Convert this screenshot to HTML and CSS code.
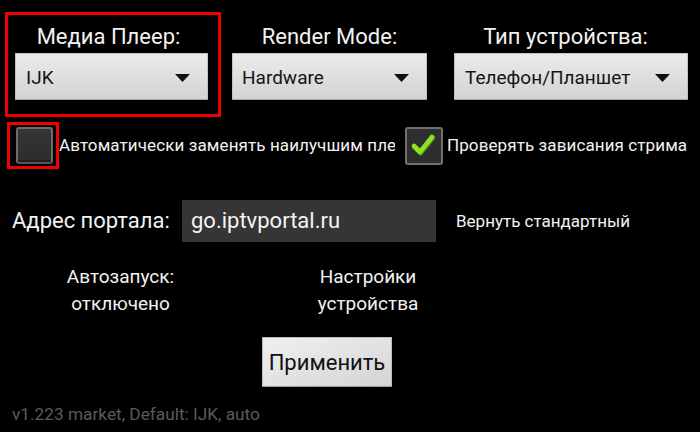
FILE: index.html
```html
<!DOCTYPE html>
<html lang="ru">
<head>
<meta charset="utf-8">
<title>Настройки</title>
<link rel="stylesheet" href="styles.css">
</head>
<body>
<div class="screen">
  <div class="top-row">
    <div class="col col-player highlight">
      <div class="label label-player">Медиа Плеер:</div>
      <div class="select">
        <span class="select-text">IJK</span>
        <svg class="arrow" width="15" height="8" viewBox="0 0 15 8"><polygon points="0,0 15,0 7.5,8" fill="#111"/></svg>
      </div>
    </div>
    <div class="col col-render">
      <div class="label">Render Mode:</div>
      <div class="select">
        <span class="select-text">Hardware</span>
        <svg class="arrow" width="15" height="8" viewBox="0 0 15 8"><polygon points="0,0 15,0 7.5,8" fill="#111"/></svg>
      </div>
    </div>
    <div class="col col-device">
      <div class="label label-device">Тип устройства:</div>
      <div class="select">
        <span class="select-text">Телефон/Планшет</span>
        <svg class="arrow" width="15" height="8" viewBox="0 0 15 8"><polygon points="0,0 15,0 7.5,8" fill="#111"/></svg>
      </div>
    </div>
  </div>

  <div class="check-row">
    <div class="check-hl"><div class="checkbox"></div></div>
    <div class="check-text check-text-clip">Автоматически заменять наилучшим плеером</div>
    <div class="checkbox checkbox-on">
      <svg width="34" height="34" viewBox="0 0 34 34"><polyline points="7,17 13,23 25,8" fill="none" stroke="#4f8a10" stroke-width="5.2" stroke-linecap="round" stroke-linejoin="round" transform="translate(0.6,0.8)"/><polyline points="7,17 13,23 25,8" fill="none" stroke="#8ee024" stroke-width="4.6" stroke-linecap="round" stroke-linejoin="round"/></svg>
    </div>
    <div class="check-text check-text-2">Проверять зависания стрима</div>
  </div>

  <div class="address-row">
    <div class="address-label">Адрес портала:</div>
    <div class="address-input">go.iptvportal.ru</div>
    <div class="reset">Вернуть стандартный</div>
  </div>

  <div class="info-row">
    <div class="info info-autostart">Автозапуск:<br>отключено</div>
    <div class="info info-device">Настройки<br>устройства</div>
  </div>

  <div class="button-row">
    <div class="apply">Применить</div>
  </div>

  <div class="footer">v1.223 market, Default: IJK, auto</div>
</div>
</body>
</html>
```

FILE: styles.css
```css
* { box-sizing: border-box; }

html, body {
  margin: 0;
  padding: 0;
  background: #000;
}

body {
  width: 700px;
  height: 432px;
  overflow: hidden;
  font-family: Roboto, "Noto Sans", sans-serif;
  color: #f2f2f2;
}

.screen {
  padding-top: 12px;
}

.top-row {
  display: flex;
  align-items: flex-start;
}

.col {
  border: 3px solid transparent;
  padding: 9px 0 14px 0;
}

.highlight {
  border-color: #f00000;
}

.col-player {
  margin-left: 5px;
  width: 216px;
  padding: 9px 10px 14px 7px;
}

.col-render {
  margin-left: 8px;
  width: 201px;
}

.col-device {
  margin-left: 21px;
  width: 240px;
}

.label {
  font-size: 22px;
  line-height: 26px;
  height: 26px;
  margin-bottom: 3px;
  text-align: center;
  white-space: nowrap;
}

.label-player { padding-right: 6px; }
.label-device { padding-right: 11px; }

.select {
  height: 47px;
  display: flex;
  align-items: center;
  justify-content: space-between;
  padding: 1px 17px 0 10px;
  background: linear-gradient(#ebebeb, #d3d3d3);
  border: 1px solid #c2c2c2;
  border-bottom-color: #a8a8a8;
  border-radius: 1px;
  color: #151515;
}

.col-render .select { padding-left: 9px; }

.select-text {
  font-size: 19px;
  white-space: nowrap;
}

.arrow {
  display: block;
  margin-top: 2px;
  flex: none;
}

.check-row {
  display: flex;
  align-items: flex-start;
  margin-top: 5px;
}

.check-hl {
  margin-left: 7px;
  width: 52px;
  height: 47px;
  border: 3px solid #f00000;
  padding: 2px 0 0 6px;
  flex: none;
}

.checkbox {
  width: 37px;
  height: 37px;
  background: linear-gradient(#353535, #2c2c2c);
  border: 2px solid #6c6c6c;
  border-bottom-color: #555;
  border-radius: 3px;
  box-shadow: inset 0 -2px 0 #1e1e1e;
  flex: none;
}

.checkbox-on {
  width: 38px;
  height: 38px;
  margin-left: 10px;
  margin-top: 5px;
  background: #2e2e2e;
  border-color: #707070;
  box-shadow: none;
}

.checkbox-on svg {
  display: block;
}

.check-text {
  font-size: 17px;
  line-height: 47px;
  white-space: nowrap;
  letter-spacing: 0.1px;
}

.check-text-clip {
  width: 336px;
  overflow: hidden;
}

.check-text-2 {
  margin-left: 4px;
}

.address-row {
  display: flex;
  align-items: center;
  margin-top: 31px;
  height: 42px;
}

.address-label {
  width: 182px;
  padding-left: 12px;
  font-size: 22px;
  line-height: 42px;
  white-space: nowrap;
}

.address-input {
  width: 254px;
  height: 42px;
  background: #353535;
  padding-left: 9px;
  font-size: 22px;
  line-height: 42px;
  color: #f4f4f4;
}

.reset {
  margin-left: 20px;
  font-size: 17px;
  line-height: 42px;
  white-space: nowrap;
}

.info-row {
  display: flex;
  margin-top: 21px;
}

.info {
  text-align: center;
  font-size: 19px;
  line-height: 27px;
}

.info-autostart { width: 241px; }
.info-device { width: 254px; }

.button-row {
  display: flex;
  margin-top: 20px;
}

.apply {
  margin-left: 262px;
  width: 130px;
  height: 50px;
  padding-top: 2px;
  line-height: 46px;
  text-align: center;
  font-size: 22px;
  color: #111;
  background: linear-gradient(160deg, #f0f0f0, #d4d4d4);
  border: 1px solid #bdbdbd;
  border-bottom-color: #9c9c9c;
  border-radius: 1px;
}

.footer {
  margin-top: 17px;
  padding-left: 12px;
  font-size: 17.25px;
  line-height: 21px;
  color: #5a5a5a;
  white-space: nowrap;
}
```
